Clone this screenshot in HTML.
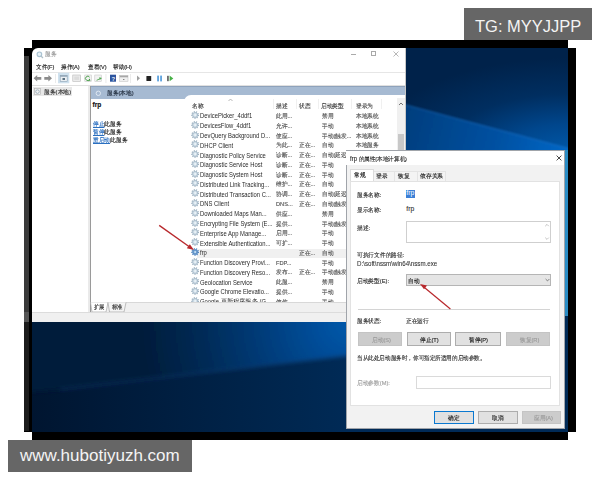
<!DOCTYPE html>
<html><head><meta charset="utf-8">
<style>
*{margin:0;padding:0;box-sizing:border-box}
html,body{width:600px;height:480px;overflow:hidden;background:#fff}
body{position:relative;font-family:"Liberation Sans",sans-serif;color:#000}
.a{position:absolute}
.k{background:#000}
.t{position:absolute;white-space:nowrap;font-size:6px;line-height:8px;color:#222;-webkit-text-stroke:0.15px currentColor}
.lbl2{-webkit-text-stroke:0}
#screen{left:32px;top:48px;width:536px;height:384px;overflow:hidden;
 background:
  linear-gradient(172deg, rgba(0,0,0,0) 0%, rgba(0,0,0,0) 100%),
  radial-gradient(ellipse 260px 140px at 470px 250px, #0b4f96 0%, #0a3f7c 45%, rgba(8,40,85,0) 100%),
  linear-gradient(180deg,#0a2c5e 0%,#072252 50%,#041a40 100%);}
.lbl{background:#666;color:#f4f4f4}
</style></head><body>
<!-- black frame -->
<div class="a k" style="left:32px;top:40px;width:536px;height:8px"></div>
<div class="a k" style="left:24px;top:48px;width:8px;height:384px"></div>
<div class="a" style="left:24px;top:56px;width:5px;height:256px;background:#3a3a3a"></div>
<div class="a" style="left:24px;top:312px;width:5px;height:10px;background:#555"></div>
<div class="a" style="left:24px;top:322px;width:5px;height:109px;background:#1c1c1c"></div>
<div class="a k" style="left:568px;top:48px;width:8px;height:384px"></div>
<div class="a k" style="left:32px;top:432px;width:536px;height:8px"></div>

<svg class="a" style="left:32px;top:48px" width="536" height="384" viewBox="32 48 536 384">
 <defs>
  <radialGradient id="gtop" gradientUnits="userSpaceOnUse" cx="568" cy="152" r="200" gradientTransform="translate(568 152) scale(1 0.47) translate(-568 -152)">
   <stop offset="0" stop-color="#0058a8"/><stop offset="0.3" stop-color="#00468c"/><stop offset="0.62" stop-color="#002e60"/><stop offset="1" stop-color="#00224a"/>
  </radialGradient>
  <linearGradient id="gbeam" gradientUnits="userSpaceOnUse" x1="405" y1="120" x2="568" y2="160">
   <stop offset="0" stop-color="#003e7e"/><stop offset="0.6" stop-color="#0052a4"/><stop offset="1" stop-color="#0068c8"/>
  </linearGradient>
  <radialGradient id="rglow" gradientUnits="userSpaceOnUse" cx="350" cy="322" r="210">
   <stop offset="0" stop-color="#0058aa"/><stop offset="0.15" stop-color="#004f9c"/><stop offset="0.45" stop-color="#003a76"/><stop offset="0.72" stop-color="#002a55"/><stop offset="1" stop-color="#001c3a"/>
  </radialGradient>
  <linearGradient id="gbl2" gradientUnits="userSpaceOnUse" x1="32" y1="0" x2="346" y2="0">
   <stop offset="0" stop-color="#001530"/><stop offset="0.85" stop-color="#002750"/><stop offset="1" stop-color="#002a56"/>
  </linearGradient>
  <filter id="bl" x="-10%" y="-10%" width="120%" height="120%"><feGaussianBlur stdDeviation="1.2"/></filter>
  <filter id="bl2" x="-10%" y="-10%" width="120%" height="120%"><feGaussianBlur stdDeviation="2.2"/></filter>
 </defs>
 <rect x="32" y="48" width="536" height="384" fill="#001c3a"/>
 <!-- top right region -->
 <rect x="400" y="44" width="172" height="116" fill="url(#gtop)"/>
 <path d="M396 102 L572 149 L572 162 L396 162 Z" fill="url(#gbeam)" filter="url(#bl)"/>
 <path d="M400 103.5 L568 148.5" stroke="#2a78c8" stroke-width="1.2" opacity="0.45" filter="url(#bl)"/>
 <!-- right strip -->
 <rect x="560" y="150" width="8" height="282" fill="#2a8cc4"/>
 <!-- bottom left region -->
 <rect x="28" y="316" width="540" height="118" fill="url(#gbl2)"/>
 <path d="M20 310 L360 310 L360 354 L60 389.5 L20 393 Z" fill="url(#rglow)" filter="url(#bl2)"/>
 <path d="M355 354.5 L60 389.5" stroke="#2a6ab8" stroke-width="2" opacity="0.25" filter="url(#bl2)"/>
</svg>


<!-- services window -->
<div class="a k" style="left:32px;top:48px;width:5px;height:5px"></div>
<div class="a" style="left:32px;top:48px;width:374px;height:274px;background:#fff;border-top-left-radius:6px;overflow:hidden">
</div>
<div class="a" style="left:405px;top:48px;width:1px;height:274px;background:#c8c8c8"></div>
<!-- title bar -->
<svg class="a" style="left:35.5px;top:50.5px" width="8" height="8" viewBox="0 0 8 8">
 <circle cx="3.4" cy="3.3" r="2.3" fill="#e6f0f5" stroke="#a9c2d2" stroke-width="1.1"/>
 <path d="M5 5 L7 7" stroke="#b0c0c8" stroke-width="1.2"/>
</svg>
<div class="t" style="left:45px;top:50px;font-size:6px;transform:scaleX(0.950);transform-origin:0 0;color:#9a9a9a">服务</div>
<div class="a" style="left:351px;top:53.8px;width:4.5px;height:0.7px;background:#aaa"></div>
<div class="a" style="left:371.3px;top:51.3px;width:5px;height:5px;border:0.7px solid #a8a8a8"></div>
<svg class="a" style="left:393px;top:51px" width="6" height="6" viewBox="0 0 6 6"><path d="M0.5 0.5L5.5 5.5M5.5 0.5L0.5 5.5" stroke="#999" stroke-width="0.7"/></svg>
<!-- menu -->
<div class="t" style="left:36px;top:63px;font-size:6px;transform:scaleX(0.932);transform-origin:0 0">文件(F)</div>
<div class="t" style="left:61px;top:63px;font-size:6px;transform:scaleX(0.932);transform-origin:0 0">操作(A)</div>
<div class="t" style="left:87.5px;top:63px;font-size:6px;transform:scaleX(0.932);transform-origin:0 0">查看(V)</div>
<div class="t" style="left:113px;top:63px;font-size:6px;transform:scaleX(0.932);transform-origin:0 0">帮助(H)</div>
<div class="a" style="left:32px;top:72px;width:373px;height:1px;background:#e6e6e6"></div>
<!-- toolbar -->
<svg class="a" style="left:32px;top:72px" width="150" height="13" viewBox="0 0 150 13">
 <path d="M1.6 6.3 L5.2 3 L5.2 4.9 L9.3 4.9 L9.3 7.7 L5.2 7.7 L5.2 9.6 Z" fill="#8c8c8c"/>
 <path d="M20 6.3 L16.4 3 L16.4 4.9 L12.3 4.9 L12.3 7.7 L16.4 7.7 L16.4 9.6 Z" fill="#8c8c8c"/>
 <rect x="23" y="2" width="0.7" height="9" fill="#e2e2e2"/>
 <rect x="26" y="0.7" width="11.3" height="10.6" fill="#cfe1ee"/>
 <rect x="28.2" y="3.4" width="7" height="5.9" fill="#e9eef2" stroke="#8aa0b2" stroke-width="0.6"/>
 <rect x="28.2" y="3.4" width="7" height="1.3" fill="#8aa0b2"/>
 <rect x="30.5" y="6" width="2.5" height="2" fill="#5a7080"/>
 <rect x="40.8" y="3" width="7.8" height="6.3" fill="#ececec" stroke="#b8b8b8" stroke-width="0.6"/>
 <rect x="42.3" y="4.5" width="4.8" height="3.4" fill="#dcdcdc"/>
 <rect x="52.8" y="3" width="6.5" height="6.5" fill="#f2f2f2" stroke="#c0c0c0" stroke-width="0.5"/>
 <path d="M57.6 5.2 A2.2 2.2 0 1 0 57.8 7.2" fill="none" stroke="#3f9a3f" stroke-width="0.9"/>
 <path d="M56.2 8.7 L58.6 8.7 L57.4 6.6 Z" fill="#3f9a3f"/>
 <rect x="62.8" y="3" width="6.5" height="6.5" fill="#f2f2f2" stroke="#c0c0c0" stroke-width="0.5"/>
 <path d="M64.6 8.3 L68.2 6.7" stroke="#52a852" stroke-width="0.9"/>
 <path d="M70 6 L67.2 5.2 L67.8 8 Z" fill="#52a852"/>
 <rect x="73.6" y="2" width="0.7" height="9" fill="#e2e2e2"/>
 <rect x="78" y="2.7" width="6" height="7" fill="#2d549e"/>
 <text x="79.4" y="8.8" font-size="6" fill="#e8eef8" font-family="Liberation Sans" font-weight="bold">?</text>
 <rect x="87.7" y="3.6" width="8.3" height="5.7" fill="#f0f0f0" stroke="#bdbdbd" stroke-width="0.5"/>
 <rect x="87.7" y="3.6" width="8.3" height="1.7" fill="#a8a8a8"/>
 <rect x="91.3" y="7" width="1" height="1" fill="#555"/>
 <rect x="98" y="2" width="0.7" height="9" fill="#e2e2e2"/>
 <path d="M105 3.6 L108 6.3 L105 9 Z" fill="#a0a0a0"/>
 <rect x="114.4" y="4" width="4.8" height="5" rx="0.6" fill="#222"/>
 <rect x="125.3" y="3.6" width="1.5" height="5.8" fill="#3d8fd6"/>
 <rect x="128.3" y="3.6" width="1.5" height="5.8" fill="#3d8fd6"/>
 <rect x="135.3" y="3.8" width="1.3" height="5.4" fill="#333"/>
 <path d="M137.6 3.6 L141.3 6.4 L137.6 9.2 Z" fill="#46b046"/>
</svg>
<div class="a" style="left:32px;top:85px;width:373px;height:1px;background:#e0e0e0"></div>

<!-- left pane -->
<div class="a" style="left:88px;top:86px;width:2px;height:226px;background:#eaeaea"></div>
<div class="a" style="left:33px;top:87px;width:39px;height:9px;background:#e8e8e8"></div>
<svg class="a" style="left:34px;top:88px" width="8" height="8" viewBox="0 0 8 8"><rect x="0.5" y="0.5" width="6" height="6" fill="#f2f2f2" stroke="#b0b0b0" stroke-width="0.6"/><circle cx="3.5" cy="3.6" r="1.8" fill="none" stroke="#9aaab8" stroke-width="0.9"/></svg>
<div class="t" style="left:43.8px;top:87.5px;font-size:6px;transform:scaleX(0.967);transform-origin:0 0;color:#333">服务(本地)</div>
<!-- right pane -->
<div class="a" style="left:90px;top:86px;width:1px;height:226px;background:#9a9a9a"></div>
<div class="a" style="left:91px;top:86px;width:314px;height:13px;background:#a6bad2;border-top:1px solid #8ea2bb"></div>
<svg class="a" style="left:95px;top:89.5px" width="7" height="7" viewBox="0 0 7 7"><circle cx="3.3" cy="3.3" r="2.2" fill="none" stroke="#dfe8f2" stroke-width="1"/></svg>
<div class="t" style="left:106.7px;top:89px;font-size:6px;transform:scaleX(0.950);transform-origin:0 0;color:#1e2a3a">服务(本地)</div>
<div class="a" style="left:184px;top:95px;width:221px;height:207px;background:#fff;border-top-left-radius:7px"></div>
<div class="t" style="left:92.5px;top:101px;font-size:6.6px;font-weight:bold;color:#111">frp</div>
<div class="t" style="left:92.5px;top:119.5px;font-size:6px;transform:scaleX(0.950);transform-origin:0 0;color:#222"><span style="color:#2a6fc0;text-decoration:underline">停止</span>此服务</div>
<div class="t" style="left:92.5px;top:127.5px;font-size:6px;transform:scaleX(0.950);transform-origin:0 0;color:#222"><span style="color:#2a6fc0;text-decoration:underline">暂停</span>此服务</div>
<div class="t" style="left:92.5px;top:135.5px;font-size:6px;transform:scaleX(0.950);transform-origin:0 0;color:#222"><span style="color:#2a6fc0;text-decoration:underline">重启动</span>此服务</div>
<div class="t" style="left:192.3px;top:101.5px;font-size:6px;transform:scaleX(0.950);transform-origin:0 0;color:#444">名称</div>
<svg class="a" style="left:228px;top:98px" width="5" height="4" viewBox="0 0 5 4"><path d="M0.5 3L2.5 1L4.5 3" fill="none" stroke="#999" stroke-width="0.7"/></svg>
<div class="t" style="left:276px;top:101.5px;font-size:6px;transform:scaleX(0.950);transform-origin:0 0;color:#444">描述</div>
<div class="t" style="left:299.4px;top:101.5px;font-size:6px;transform:scaleX(0.950);transform-origin:0 0;color:#444">状态</div>
<div class="t" style="left:321.4px;top:101.5px;font-size:6px;transform:scaleX(0.950);transform-origin:0 0;color:#444">启动类型</div>
<div class="t" style="left:356px;top:101.5px;font-size:6px;transform:scaleX(0.950);transform-origin:0 0;color:#444">登录为</div>
<div class="a" style="left:273px;top:99px;width:1px;height:10px;background:#f0f0f0"></div>
<div class="a" style="left:296px;top:99px;width:1px;height:10px;background:#f0f0f0"></div>
<div class="a" style="left:318px;top:99px;width:1px;height:10px;background:#f0f0f0"></div>
<div class="a" style="left:351px;top:99px;width:1px;height:10px;background:#f0f0f0"></div>
<div class="a" style="left:381px;top:99px;width:1px;height:10px;background:#f0f0f0"></div>
<div class="a" style="left:397px;top:98px;width:8px;height:204px;background:#f0f0f0"></div>
<svg class="a" style="left:398px;top:101.5px" width="6" height="4" viewBox="0 0 6 4"><path d="M1 3L3 1L5 3" fill="none" stroke="#555" stroke-width="0.8"/></svg>
<div class="a" style="left:398px;top:133.5px;width:6px;height:40px;background:#c8c8c8"></div>
<div class="a" style="left:197px;top:248.5px;width:200px;height:9.5px;background:#f0f0f0"></div>
<svg class="a" style="left:190.6px;top:111.0px" width="9" height="9" viewBox="0 0 9 9"><circle cx="4.1" cy="4" r="3.3" fill="none" stroke="#98aebe" stroke-width="1.2" stroke-dasharray="1.1 1.2"/><circle cx="4.1" cy="4" r="2.6" fill="#cfdee8" stroke="#98aebe" stroke-width="0.7"/><circle cx="4.1" cy="4" r="1" fill="#eef5f9"/></svg>
<div class="t" style="left:200px;top:112.40px;font-size:6.6px;transform:scaleX(0.89);transform-origin:0 0;color:#2a2a2a;-webkit-text-stroke:0">DevicePicker_4ddf1</div>
<div class="t" style="left:276px;top:112.00px;font-size:6px;transform:scaleX(0.950);transform-origin:0 0;color:#555">此用...</div>
<div class="t" style="left:321.6px;top:112.00px;font-size:6px;transform:scaleX(0.950);transform-origin:0 0;color:#555">禁用</div>
<div class="t" style="left:356px;top:112.00px;font-size:6px;transform:scaleX(0.950);transform-origin:0 0;color:#555">本地系统</div>
<svg class="a" style="left:190.6px;top:120.78px" width="9" height="9" viewBox="0 0 9 9"><circle cx="4.1" cy="4" r="3.3" fill="none" stroke="#98aebe" stroke-width="1.2" stroke-dasharray="1.1 1.2"/><circle cx="4.1" cy="4" r="2.6" fill="#cfdee8" stroke="#98aebe" stroke-width="0.7"/><circle cx="4.1" cy="4" r="1" fill="#eef5f9"/></svg>
<div class="t" style="left:200px;top:122.18px;font-size:6.6px;transform:scaleX(0.89);transform-origin:0 0;color:#2a2a2a;-webkit-text-stroke:0">DevicesFlow_4ddf1</div>
<div class="t" style="left:276px;top:121.78px;font-size:6px;transform:scaleX(0.950);transform-origin:0 0;color:#555">允许...</div>
<div class="t" style="left:321.6px;top:121.78px;font-size:6px;transform:scaleX(0.950);transform-origin:0 0;color:#555">手动</div>
<div class="t" style="left:356px;top:121.78px;font-size:6px;transform:scaleX(0.950);transform-origin:0 0;color:#555">本地系统</div>
<svg class="a" style="left:190.6px;top:130.56px" width="9" height="9" viewBox="0 0 9 9"><circle cx="4.1" cy="4" r="3.3" fill="none" stroke="#98aebe" stroke-width="1.2" stroke-dasharray="1.1 1.2"/><circle cx="4.1" cy="4" r="2.6" fill="#cfdee8" stroke="#98aebe" stroke-width="0.7"/><circle cx="4.1" cy="4" r="1" fill="#eef5f9"/></svg>
<div class="t" style="left:200px;top:131.96px;font-size:6.6px;transform:scaleX(0.89);transform-origin:0 0;color:#2a2a2a;-webkit-text-stroke:0">DevQuery Background D...</div>
<div class="t" style="left:276px;top:131.56px;font-size:6px;transform:scaleX(0.950);transform-origin:0 0;color:#555">使应...</div>
<div class="t" style="left:321.6px;top:131.56px;font-size:6px;transform:scaleX(0.950);transform-origin:0 0;color:#555">手动(触发...</div>
<div class="t" style="left:356px;top:131.56px;font-size:6px;transform:scaleX(0.950);transform-origin:0 0;color:#555">本地系统</div>
<svg class="a" style="left:190.6px;top:140.34px" width="9" height="9" viewBox="0 0 9 9"><circle cx="4.1" cy="4" r="3.3" fill="none" stroke="#98aebe" stroke-width="1.2" stroke-dasharray="1.1 1.2"/><circle cx="4.1" cy="4" r="2.6" fill="#cfdee8" stroke="#98aebe" stroke-width="0.7"/><circle cx="4.1" cy="4" r="1" fill="#eef5f9"/></svg>
<div class="t" style="left:200px;top:141.74px;font-size:6.6px;transform:scaleX(0.89);transform-origin:0 0;color:#2a2a2a;-webkit-text-stroke:0">DHCP Client</div>
<div class="t" style="left:276px;top:141.34px;font-size:6px;transform:scaleX(0.950);transform-origin:0 0;color:#555">为此...</div>
<div class="t" style="left:299.4px;top:141.34px;font-size:6px;transform:scaleX(0.950);transform-origin:0 0;color:#555">正在...</div>
<div class="t" style="left:321.6px;top:141.34px;font-size:6px;transform:scaleX(0.950);transform-origin:0 0;color:#555">自动</div>
<div class="t" style="left:356px;top:141.34px;font-size:6px;transform:scaleX(0.950);transform-origin:0 0;color:#555">本地服务</div>
<svg class="a" style="left:190.6px;top:150.12px" width="9" height="9" viewBox="0 0 9 9"><circle cx="4.1" cy="4" r="3.3" fill="none" stroke="#98aebe" stroke-width="1.2" stroke-dasharray="1.1 1.2"/><circle cx="4.1" cy="4" r="2.6" fill="#cfdee8" stroke="#98aebe" stroke-width="0.7"/><circle cx="4.1" cy="4" r="1" fill="#eef5f9"/></svg>
<div class="t" style="left:200px;top:151.52px;font-size:6.6px;transform:scaleX(0.89);transform-origin:0 0;color:#2a2a2a;-webkit-text-stroke:0">Diagnostic Policy Service</div>
<div class="t" style="left:276px;top:151.12px;font-size:6px;transform:scaleX(0.950);transform-origin:0 0;color:#555">诊断...</div>
<div class="t" style="left:299.4px;top:151.12px;font-size:6px;transform:scaleX(0.950);transform-origin:0 0;color:#555">正在...</div>
<div class="t" style="left:321.6px;top:151.12px;font-size:6px;transform:scaleX(0.950);transform-origin:0 0;color:#555">自动(延迟...</div>
<svg class="a" style="left:190.6px;top:159.9px" width="9" height="9" viewBox="0 0 9 9"><circle cx="4.1" cy="4" r="3.3" fill="none" stroke="#98aebe" stroke-width="1.2" stroke-dasharray="1.1 1.2"/><circle cx="4.1" cy="4" r="2.6" fill="#cfdee8" stroke="#98aebe" stroke-width="0.7"/><circle cx="4.1" cy="4" r="1" fill="#eef5f9"/></svg>
<div class="t" style="left:200px;top:161.30px;font-size:6.6px;transform:scaleX(0.89);transform-origin:0 0;color:#2a2a2a;-webkit-text-stroke:0">Diagnostic Service Host</div>
<div class="t" style="left:276px;top:160.90px;font-size:6px;transform:scaleX(0.950);transform-origin:0 0;color:#555">诊断...</div>
<div class="t" style="left:299.4px;top:160.90px;font-size:6px;transform:scaleX(0.950);transform-origin:0 0;color:#555">正在...</div>
<div class="t" style="left:321.6px;top:160.90px;font-size:6px;transform:scaleX(0.950);transform-origin:0 0;color:#555">手动</div>
<svg class="a" style="left:190.6px;top:169.68px" width="9" height="9" viewBox="0 0 9 9"><circle cx="4.1" cy="4" r="3.3" fill="none" stroke="#98aebe" stroke-width="1.2" stroke-dasharray="1.1 1.2"/><circle cx="4.1" cy="4" r="2.6" fill="#cfdee8" stroke="#98aebe" stroke-width="0.7"/><circle cx="4.1" cy="4" r="1" fill="#eef5f9"/></svg>
<div class="t" style="left:200px;top:171.08px;font-size:6.6px;transform:scaleX(0.89);transform-origin:0 0;color:#2a2a2a;-webkit-text-stroke:0">Diagnostic System Host</div>
<div class="t" style="left:276px;top:170.68px;font-size:6px;transform:scaleX(0.950);transform-origin:0 0;color:#555">诊断...</div>
<div class="t" style="left:299.4px;top:170.68px;font-size:6px;transform:scaleX(0.950);transform-origin:0 0;color:#555">正在...</div>
<div class="t" style="left:321.6px;top:170.68px;font-size:6px;transform:scaleX(0.950);transform-origin:0 0;color:#555">手动</div>
<svg class="a" style="left:190.6px;top:179.46px" width="9" height="9" viewBox="0 0 9 9"><circle cx="4.1" cy="4" r="3.3" fill="none" stroke="#98aebe" stroke-width="1.2" stroke-dasharray="1.1 1.2"/><circle cx="4.1" cy="4" r="2.6" fill="#cfdee8" stroke="#98aebe" stroke-width="0.7"/><circle cx="4.1" cy="4" r="1" fill="#eef5f9"/></svg>
<div class="t" style="left:200px;top:180.86px;font-size:6.6px;transform:scaleX(0.89);transform-origin:0 0;color:#2a2a2a;-webkit-text-stroke:0">Distributed Link Tracking...</div>
<div class="t" style="left:276px;top:180.46px;font-size:6px;transform:scaleX(0.950);transform-origin:0 0;color:#555">维护...</div>
<div class="t" style="left:299.4px;top:180.46px;font-size:6px;transform:scaleX(0.950);transform-origin:0 0;color:#555">正在...</div>
<div class="t" style="left:321.6px;top:180.46px;font-size:6px;transform:scaleX(0.950);transform-origin:0 0;color:#555">自动</div>
<svg class="a" style="left:190.6px;top:189.24px" width="9" height="9" viewBox="0 0 9 9"><circle cx="4.1" cy="4" r="3.3" fill="none" stroke="#98aebe" stroke-width="1.2" stroke-dasharray="1.1 1.2"/><circle cx="4.1" cy="4" r="2.6" fill="#cfdee8" stroke="#98aebe" stroke-width="0.7"/><circle cx="4.1" cy="4" r="1" fill="#eef5f9"/></svg>
<div class="t" style="left:200px;top:190.64px;font-size:6.6px;transform:scaleX(0.89);transform-origin:0 0;color:#2a2a2a;-webkit-text-stroke:0">Distributed Transaction C...</div>
<div class="t" style="left:276px;top:190.24px;font-size:6px;transform:scaleX(0.950);transform-origin:0 0;color:#555">协调...</div>
<div class="t" style="left:299.4px;top:190.24px;font-size:6px;transform:scaleX(0.950);transform-origin:0 0;color:#555">正在...</div>
<div class="t" style="left:321.6px;top:190.24px;font-size:6px;transform:scaleX(0.950);transform-origin:0 0;color:#555">自动(延迟...</div>
<svg class="a" style="left:190.6px;top:199.02px" width="9" height="9" viewBox="0 0 9 9"><circle cx="4.1" cy="4" r="3.3" fill="none" stroke="#98aebe" stroke-width="1.2" stroke-dasharray="1.1 1.2"/><circle cx="4.1" cy="4" r="2.6" fill="#cfdee8" stroke="#98aebe" stroke-width="0.7"/><circle cx="4.1" cy="4" r="1" fill="#eef5f9"/></svg>
<div class="t" style="left:200px;top:200.42px;font-size:6.6px;transform:scaleX(0.89);transform-origin:0 0;color:#2a2a2a;-webkit-text-stroke:0">DNS Client</div>
<div class="t" style="left:276px;top:200.02px;font-size:6px;transform:scaleX(0.950);transform-origin:0 0;color:#555">DNS...</div>
<div class="t" style="left:299.4px;top:200.02px;font-size:6px;transform:scaleX(0.950);transform-origin:0 0;color:#555">正在...</div>
<div class="t" style="left:321.6px;top:200.02px;font-size:6px;transform:scaleX(0.950);transform-origin:0 0;color:#555">自动(触发...</div>
<svg class="a" style="left:190.6px;top:208.8px" width="9" height="9" viewBox="0 0 9 9"><circle cx="4.1" cy="4" r="3.3" fill="none" stroke="#98aebe" stroke-width="1.2" stroke-dasharray="1.1 1.2"/><circle cx="4.1" cy="4" r="2.6" fill="#cfdee8" stroke="#98aebe" stroke-width="0.7"/><circle cx="4.1" cy="4" r="1" fill="#eef5f9"/></svg>
<div class="t" style="left:200px;top:210.20px;font-size:6.6px;transform:scaleX(0.89);transform-origin:0 0;color:#2a2a2a;-webkit-text-stroke:0">Downloaded Maps Man...</div>
<div class="t" style="left:276px;top:209.80px;font-size:6px;transform:scaleX(0.950);transform-origin:0 0;color:#555">供应...</div>
<div class="t" style="left:321.6px;top:209.80px;font-size:6px;transform:scaleX(0.950);transform-origin:0 0;color:#555">禁用</div>
<svg class="a" style="left:190.6px;top:218.58px" width="9" height="9" viewBox="0 0 9 9"><circle cx="4.1" cy="4" r="3.3" fill="none" stroke="#98aebe" stroke-width="1.2" stroke-dasharray="1.1 1.2"/><circle cx="4.1" cy="4" r="2.6" fill="#cfdee8" stroke="#98aebe" stroke-width="0.7"/><circle cx="4.1" cy="4" r="1" fill="#eef5f9"/></svg>
<div class="t" style="left:200px;top:219.98px;font-size:6.6px;transform:scaleX(0.89);transform-origin:0 0;color:#2a2a2a;-webkit-text-stroke:0">Encrypting File System (E...</div>
<div class="t" style="left:276px;top:219.58px;font-size:6px;transform:scaleX(0.950);transform-origin:0 0;color:#555">提供...</div>
<div class="t" style="left:321.6px;top:219.58px;font-size:6px;transform:scaleX(0.950);transform-origin:0 0;color:#555">手动(触发...</div>
<svg class="a" style="left:190.6px;top:228.36px" width="9" height="9" viewBox="0 0 9 9"><circle cx="4.1" cy="4" r="3.3" fill="none" stroke="#98aebe" stroke-width="1.2" stroke-dasharray="1.1 1.2"/><circle cx="4.1" cy="4" r="2.6" fill="#cfdee8" stroke="#98aebe" stroke-width="0.7"/><circle cx="4.1" cy="4" r="1" fill="#eef5f9"/></svg>
<div class="t" style="left:200px;top:229.76px;font-size:6.6px;transform:scaleX(0.89);transform-origin:0 0;color:#2a2a2a;-webkit-text-stroke:0">Enterprise App Manage...</div>
<div class="t" style="left:276px;top:229.36px;font-size:6px;transform:scaleX(0.950);transform-origin:0 0;color:#555">启用...</div>
<div class="t" style="left:321.6px;top:229.36px;font-size:6px;transform:scaleX(0.950);transform-origin:0 0;color:#555">手动</div>
<svg class="a" style="left:190.6px;top:238.14px" width="9" height="9" viewBox="0 0 9 9"><circle cx="4.1" cy="4" r="3.3" fill="none" stroke="#98aebe" stroke-width="1.2" stroke-dasharray="1.1 1.2"/><circle cx="4.1" cy="4" r="2.6" fill="#cfdee8" stroke="#98aebe" stroke-width="0.7"/><circle cx="4.1" cy="4" r="1" fill="#eef5f9"/></svg>
<div class="t" style="left:200px;top:239.54px;font-size:6.6px;transform:scaleX(0.89);transform-origin:0 0;color:#2a2a2a;-webkit-text-stroke:0">Extensible Authentication...</div>
<div class="t" style="left:276px;top:239.14px;font-size:6px;transform:scaleX(0.950);transform-origin:0 0;color:#555">可扩...</div>
<div class="t" style="left:321.6px;top:239.14px;font-size:6px;transform:scaleX(0.950);transform-origin:0 0;color:#555">手动</div>
<svg class="a" style="left:190.6px;top:247.92px" width="9" height="9" viewBox="0 0 9 9"><circle cx="4.1" cy="4" r="3.3" fill="none" stroke="#4a80bc" stroke-width="1.2" stroke-dasharray="1.1 1.2"/><circle cx="4.1" cy="4" r="2.6" fill="#6b9ccf" stroke="#4a80bc" stroke-width="0.7"/><circle cx="4.1" cy="4" r="1" fill="#cfe6f7"/></svg>
<div class="t" style="left:200px;top:249.32px;font-size:6.6px;transform:scaleX(0.89);transform-origin:0 0;color:#2a2a2a;-webkit-text-stroke:0">frp</div>
<div class="t" style="left:299.4px;top:248.92px;font-size:6px;transform:scaleX(0.950);transform-origin:0 0;color:#555">正在...</div>
<div class="t" style="left:321.6px;top:248.92px;font-size:6px;transform:scaleX(0.950);transform-origin:0 0;color:#555">自动</div>
<svg class="a" style="left:190.6px;top:257.7px" width="9" height="9" viewBox="0 0 9 9"><circle cx="4.1" cy="4" r="3.3" fill="none" stroke="#98aebe" stroke-width="1.2" stroke-dasharray="1.1 1.2"/><circle cx="4.1" cy="4" r="2.6" fill="#cfdee8" stroke="#98aebe" stroke-width="0.7"/><circle cx="4.1" cy="4" r="1" fill="#eef5f9"/></svg>
<div class="t" style="left:200px;top:259.10px;font-size:6.6px;transform:scaleX(0.89);transform-origin:0 0;color:#2a2a2a;-webkit-text-stroke:0">Function Discovery Provi...</div>
<div class="t" style="left:276px;top:258.70px;font-size:6px;transform:scaleX(0.950);transform-origin:0 0;color:#555">FDP...</div>
<div class="t" style="left:321.6px;top:258.70px;font-size:6px;transform:scaleX(0.950);transform-origin:0 0;color:#555">手动</div>
<svg class="a" style="left:190.6px;top:267.48px" width="9" height="9" viewBox="0 0 9 9"><circle cx="4.1" cy="4" r="3.3" fill="none" stroke="#98aebe" stroke-width="1.2" stroke-dasharray="1.1 1.2"/><circle cx="4.1" cy="4" r="2.6" fill="#cfdee8" stroke="#98aebe" stroke-width="0.7"/><circle cx="4.1" cy="4" r="1" fill="#eef5f9"/></svg>
<div class="t" style="left:200px;top:268.88px;font-size:6.6px;transform:scaleX(0.89);transform-origin:0 0;color:#2a2a2a;-webkit-text-stroke:0">Function Discovery Reso...</div>
<div class="t" style="left:276px;top:268.48px;font-size:6px;transform:scaleX(0.950);transform-origin:0 0;color:#555">发布...</div>
<div class="t" style="left:299.4px;top:268.48px;font-size:6px;transform:scaleX(0.950);transform-origin:0 0;color:#555">正在...</div>
<div class="t" style="left:321.6px;top:268.48px;font-size:6px;transform:scaleX(0.950);transform-origin:0 0;color:#555">手动(触发...</div>
<svg class="a" style="left:190.6px;top:277.26px" width="9" height="9" viewBox="0 0 9 9"><circle cx="4.1" cy="4" r="3.3" fill="none" stroke="#98aebe" stroke-width="1.2" stroke-dasharray="1.1 1.2"/><circle cx="4.1" cy="4" r="2.6" fill="#cfdee8" stroke="#98aebe" stroke-width="0.7"/><circle cx="4.1" cy="4" r="1" fill="#eef5f9"/></svg>
<div class="t" style="left:200px;top:278.66px;font-size:6.6px;transform:scaleX(0.89);transform-origin:0 0;color:#2a2a2a;-webkit-text-stroke:0">Geolocation Service</div>
<div class="t" style="left:276px;top:278.26px;font-size:6px;transform:scaleX(0.950);transform-origin:0 0;color:#555">此服...</div>
<div class="t" style="left:321.6px;top:278.26px;font-size:6px;transform:scaleX(0.950);transform-origin:0 0;color:#555">禁用</div>
<svg class="a" style="left:190.6px;top:287.04px" width="9" height="9" viewBox="0 0 9 9"><circle cx="4.1" cy="4" r="3.3" fill="none" stroke="#98aebe" stroke-width="1.2" stroke-dasharray="1.1 1.2"/><circle cx="4.1" cy="4" r="2.6" fill="#cfdee8" stroke="#98aebe" stroke-width="0.7"/><circle cx="4.1" cy="4" r="1" fill="#eef5f9"/></svg>
<div class="t" style="left:200px;top:288.44px;font-size:6.6px;transform:scaleX(0.89);transform-origin:0 0;color:#2a2a2a;-webkit-text-stroke:0">Google Chrome Elevatio...</div>
<div class="t" style="left:276px;top:288.04px;font-size:6px;transform:scaleX(0.950);transform-origin:0 0;color:#555">提供...</div>
<div class="t" style="left:321.6px;top:288.04px;font-size:6px;transform:scaleX(0.950);transform-origin:0 0;color:#555">手动</div>
<svg class="a" style="left:190.6px;top:296.82px" width="9" height="9" viewBox="0 0 9 9"><circle cx="4.1" cy="4" r="3.3" fill="none" stroke="#98aebe" stroke-width="1.2" stroke-dasharray="1.1 1.2"/><circle cx="4.1" cy="4" r="2.6" fill="#cfdee8" stroke="#98aebe" stroke-width="0.7"/><circle cx="4.1" cy="4" r="1" fill="#eef5f9"/></svg>
<div class="t" style="left:200px;top:298.22px;font-size:6.6px;transform:scaleX(0.89);transform-origin:0 0;color:#2a2a2a;-webkit-text-stroke:0">Google 更新程序服务 (G...</div>
<div class="t" style="left:276px;top:297.82px;font-size:6px;transform:scaleX(0.950);transform-origin:0 0;color:#555">使你...</div>
<div class="t" style="left:321.6px;top:297.82px;font-size:6px;transform:scaleX(0.950);transform-origin:0 0;color:#555">手动</div>
<div class="a" style="left:91px;top:302px;width:314px;height:10px;background:#f0f0f0;border-top:1px solid #d8d8d8"></div>
<svg class="a" style="left:90px;top:302px" width="40" height="11" viewBox="0 0 40 11"><path d="M0.5 0.5 L2 10 L16 10 L18 0.5" fill="#fff" stroke="#999" stroke-width="0.6"/><path d="M18 0.5 L19.5 10 L34 10 L36 0.5" fill="#f4f4f4" stroke="#999" stroke-width="0.6"/></svg>
<div class="t" style="left:94px;top:303px;font-size:6px;transform:scaleX(0.898);transform-origin:0 0;color:#333">扩展</div>
<div class="t" style="left:111.5px;top:303px;font-size:6px;transform:scaleX(0.898);transform-origin:0 0;color:#333">标准</div>
<div class="a" style="left:32px;top:312px;width:373px;height:10px;background:#f0f0f0;border-top:1px solid #dcdcdc"></div>
<!-- dialog -->
<div class="a" style="left:345.5px;top:150.2px;width:219.5px;height:278.8px;background:#f2f2f2;border:1px solid #a0a4aa"></div>
<div class="a" style="left:346px;top:151px;width:218px;height:14px;background:#fff"></div>
<div class="t" style="left:350px;top:154.5px;font-size:6px;transform:scaleX(0.932);transform-origin:0 0;color:#333"><span style="font-size:6.4px">frp</span> 的属性(本地计算机)</div>
<svg class="a" style="left:555.5px;top:154.5px" width="6" height="6" viewBox="0 0 6 6"><path d="M0.6 0.6L5.4 5.4M5.4 0.6L0.6 5.4" stroke="#333" stroke-width="0.9"/></svg>
<div class="a" style="left:350px;top:180.5px;width:209.5px;height:225px;background:#fff;border:1px solid #e2e2e2"></div>
<div class="a" style="left:373px;top:171px;width:22px;height:10px;border:1px solid #e4e4e4;border-bottom:none;background:#f4f4f4"></div>
<div class="a" style="left:395px;top:171px;width:22.5px;height:10px;border:1px solid #e4e4e4;border-bottom:none;border-left:none;background:#f4f4f4"></div>
<div class="a" style="left:417.5px;top:171px;width:28px;height:10px;border:1px solid #e4e4e4;border-bottom:none;border-left:none;background:#f4f4f4"></div>
<div class="a" style="left:349.5px;top:169.2px;width:24px;height:12.3px;border:1px solid #dcdcdc;border-bottom:none;background:#fff"></div>
<div class="t" style="left:353.7px;top:170.5px;font-size:6px;transform:scaleX(0.967);transform-origin:0 0;color:#222">常规</div>
<div class="t" style="left:375.8px;top:172px;font-size:6px;transform:scaleX(0.967);transform-origin:0 0;color:#222">登录</div>
<div class="t" style="left:397.8px;top:172px;font-size:6px;transform:scaleX(0.967);transform-origin:0 0;color:#222">恢复</div>
<div class="t" style="left:420px;top:172px;font-size:6px;transform:scaleX(0.967);transform-origin:0 0;color:#222">依存关系</div>
<div class="t" style="left:357px;top:190.5px;font-size:6px;transform:scaleX(0.950);transform-origin:0 0;color:#333">服务名称:</div>
<div class="a" style="left:406px;top:190px;width:8.6px;height:8px;background:#3b7fd6"></div>
<div class="t" style="left:406.3px;top:189.3px;font-size:6.8px;color:#fff;-webkit-text-stroke:0">frp</div>
<div class="t" style="left:357px;top:205.5px;font-size:6px;transform:scaleX(0.950);transform-origin:0 0;color:#333">显示名称:</div>
<div class="t" style="left:406.3px;top:204.6px;font-size:6.8px;color:#333;-webkit-text-stroke:0.1px #333">frp</div>
<div class="t" style="left:357px;top:223.5px;font-size:6px;transform:scaleX(0.950);transform-origin:0 0;color:#333">描述:</div>
<div class="a" style="left:406px;top:221px;width:145px;height:21.5px;border:1px solid #cfcfcf;background:#fff"></div>
<svg class="a" style="left:544px;top:223px" width="6" height="18" viewBox="0 0 6 18"><path d="M1.2 3.2L3 1.4L4.8 3.2" fill="none" stroke="#aaa" stroke-width="0.7"/><path d="M1.2 14.6L3 16.4L4.8 14.6" fill="none" stroke="#aaa" stroke-width="0.7"/></svg>
<div class="t" style="left:357px;top:250.5px;font-size:6px;transform:scaleX(0.950);transform-origin:0 0;color:#333">可执行文件的路径:</div>
<div class="t" style="left:357px;top:259.5px;font-size:6.6px;transform:scaleX(0.935);transform-origin:0 0;color:#333;-webkit-text-stroke:0.08px #333">D:\soft\nssm\win64\nssm.exe</div>
<div class="t" style="left:357px;top:276.5px;font-size:6px;transform:scaleX(0.950);transform-origin:0 0;color:#333">启动类型(E):</div>
<div class="a" style="left:405.6px;top:274.4px;width:145.4px;height:12px;border:1px solid #b5b5b5;background:#e5e5e5"></div>
<div class="t" style="left:408px;top:276.5px;font-size:6px;transform:scaleX(0.950);transform-origin:0 0;color:#222">自动</div>
<svg class="a" style="left:545px;top:278px" width="5" height="4" viewBox="0 0 5 4"><path d="M0.6 1L2.5 2.9L4.4 1" fill="none" stroke="#555" stroke-width="0.7"/></svg>
<div class="a" style="left:357.5px;top:309px;width:192px;height:1px;background:#d4d4d4"></div>
<div class="t" style="left:357px;top:317px;font-size:6px;transform:scaleX(0.950);transform-origin:0 0;color:#333">服务状态:</div>
<div class="t" style="left:406px;top:317px;font-size:6px;transform:scaleX(0.950);transform-origin:0 0;color:#333">正在运行</div>
<div class="a" style="left:357.9px;top:332.3px;width:44px;height:13.3px;background:#cccccc;border:1px solid #c4c4c4"></div><div class="t" style="left:371.5px;top:335.5px;font-size:6px;transform:scaleX(0.950);transform-origin:0 0;color:#9a9a9a">启动(S)</div>
<div class="a" style="left:406.5px;top:332.3px;width:44.5px;height:13.3px;background:#e1e1e1;border:1px solid #adadad"></div><div class="t" style="left:420px;top:335.5px;font-size:6px;transform:scaleX(0.950);transform-origin:0 0;color:#222">停止(T)</div>
<div class="a" style="left:455.4px;top:332.3px;width:45.2px;height:13.3px;background:#e1e1e1;border:1px solid #adadad"></div><div class="t" style="left:469px;top:335.5px;font-size:6px;transform:scaleX(0.950);transform-origin:0 0;color:#222">暂停(P)</div>
<div class="a" style="left:506px;top:332.3px;width:44.4px;height:13.3px;background:#cccccc;border:1px solid #c4c4c4"></div><div class="t" style="left:519.5px;top:335.5px;font-size:6px;transform:scaleX(0.950);transform-origin:0 0;color:#9a9a9a">恢复(R)</div>
<div class="t" style="left:357px;top:353.5px;font-size:6px;transform:scaleX(0.932);transform-origin:0 0;color:#333">当从此处启动服务时，你可指定所适用的启动参数。</div>
<div class="t" style="left:357px;top:378.8px;font-size:6px;transform:scaleX(0.950);transform-origin:0 0;color:#a0a0a0">启动参数(M):</div>
<div class="a" style="left:415.6px;top:375.8px;width:135.4px;height:13.7px;border:1px solid #dadada;background:#fff"></div>
<div class="a" style="left:433.75px;top:411.25px;width:40px;height:12.5px;background:#e1e1e1;border:1px solid #0a78d0"></div><div class="t" style="left:448px;top:414px;font-size:6px;transform:scaleX(0.950);transform-origin:0 0;color:#222">确定</div>
<div class="a" style="left:478.25px;top:411.25px;width:39.25px;height:12.5px;background:#e1e1e1;border:1px solid #adadad"></div><div class="t" style="left:492.4px;top:414px;font-size:6px;transform:scaleX(0.950);transform-origin:0 0;color:#222">取消</div>
<div class="a" style="left:522px;top:411.25px;width:39.25px;height:12.5px;background:#cccccc;border:1px solid #c4c4c4"></div><div class="t" style="left:533.5px;top:414px;font-size:6px;transform:scaleX(0.950);transform-origin:0 0;color:#9a9a9a">应用(A)</div>
<svg class="a" style="left:0;top:0" width="600" height="480" viewBox="0 0 600 480"><path d="M159.2 225.4 L190 247.3" stroke="#b8282c" stroke-width="1.3" fill="none"/><path d="M194 250 L186.8 248.2 L189.8 244.2 Z" fill="#b8282c"/><path d="M450.4 309 L423.5 286.8" stroke="#b8282c" stroke-width="1.2" fill="none"/><path d="M420 284 L427 285.6 L424 289.2 Z" fill="#b8282c"/></svg>
<!-- labels -->
<div class="a lbl" style="left:464px;top:8px;width:128px;height:32px"></div>
<div class="t lbl2" style="left:475px;top:16px;font-size:16.5px;line-height:20px;color:#f4f4f4">TG: MYYJJPP</div>
<div class="a lbl" style="left:8px;top:440px;width:184px;height:32px"></div>
<div class="t lbl2" style="left:20px;top:446px;font-size:17px;line-height:20px;color:#f4f4f4">www.hubotiyuzh.com</div>
</body></html>
